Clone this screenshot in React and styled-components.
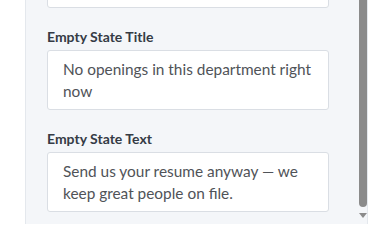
import React from "react";
import styled, { createGlobalStyle } from "styled-components";

const GlobalStyle = createGlobalStyle`
  html, body {
    margin: 0;
    padding: 0;
    background: #ffffff;
  }
  body {
    font-family: "Lato", "Liberation Sans", sans-serif;
  }
`;

const fields = [
  { label: null, value: "We post new roles every few weeks, so check back soon ..", top: true },
  { label: "Empty State Title", value: "No openings in this department right now" },
  { label: "Empty State Text", value: "Send us your resume anyway \u2014 we keep great people on file." },
];

const App = () => {
  return (
    <>
      <GlobalStyle />
      <Page>
        <Panel>
          <Form>
            {fields.map((f, i) => (
              <Field key={i}>
                {f.label && <Label>{f.label}</Label>}
                <TextBox $top={f.top}>{f.value}</TextBox>
              </Field>
            ))}
          </Form>
          <Scrollbar>
            <Thumb />
            <Arrow />
          </Scrollbar>
        </Panel>
        <Edge />
      </Page>
    </>
  );
};

export default App;

const Page = styled.div`
  display: flex;
  height: 231px;
  overflow: hidden;
  align-items: flex-start;
`;

const Panel = styled.div`
  margin-left: 25px;
  width: 341px;
  height: 224px;
  display: flex;
  background: #f4f6f9;
  border-left: 1px solid #e4e8ed;
  overflow: hidden;
`;

const Form = styled.div`
  width: 308px;
  padding: 0 0 0 21px;
  margin-top: -52px;
  display: flex;
  flex-direction: column;
  gap: 20px;
`;

const Field = styled.div`
  display: flex;
  flex-direction: column;
  gap: 5px;
`;

const Label = styled.div`
  font-size: 14px;
  line-height: 17px;
  font-weight: 700;
  color: #353b45;
`;

const TextBox = styled.div`
  width: 282px;
  height: 60px;
  box-sizing: border-box;
  background: #ffffff;
  border: 1px solid #dadee4;
  border-radius: 3px;
  padding: 7px 14px 7px 15px;
  font-size: 15.4px;
  line-height: 22px;
  color: #505358;
  overflow: hidden;
`;

const Scrollbar = styled.div`
  width: 8px;
  margin-left: 26px;
  display: flex;
  flex-direction: column;
  align-items: center;
`;

const Thumb = styled.div`
  width: 8px;
  height: 207px;
  background: #8b8b8b;
  border-radius: 0 0 4px 4px;
`;

const Arrow = styled.div`
  margin-top: 6px;
  width: 0;
  height: 0;
  border-left: 4px solid transparent;
  border-right: 4px solid transparent;
  border-top: 5px solid #8b8b8b;
`;

const Edge = styled.div`
  width: 1px;
  height: 224px;
  background: #e4e8ed;
`;
